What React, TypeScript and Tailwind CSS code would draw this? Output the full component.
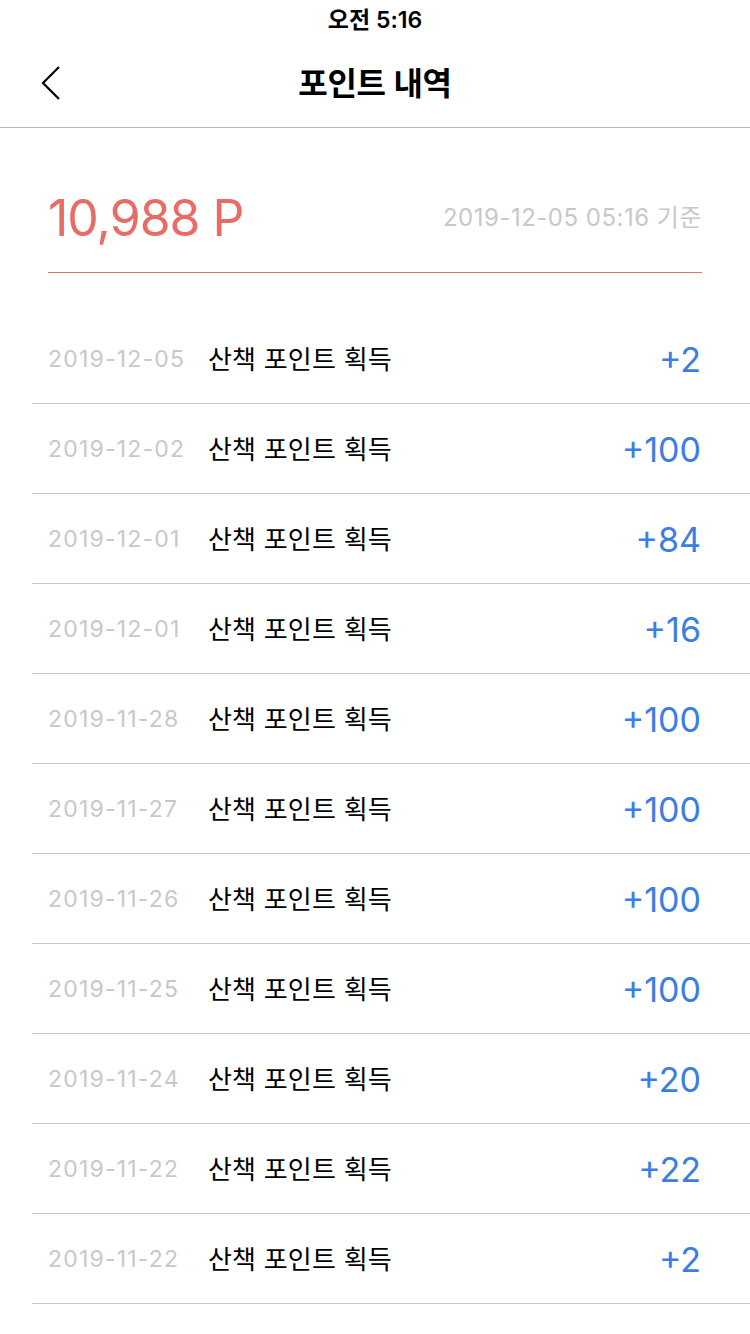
import React from "react";

const rows: [string, string][] = [
  ["2019-12-05", "+2"],
  ["2019-12-02", "+100"],
  ["2019-12-01", "+84"],
  ["2019-12-01", "+16"],
  ["2019-11-28", "+100"],
  ["2019-11-27", "+100"],
  ["2019-11-26", "+100"],
  ["2019-11-25", "+100"],
  ["2019-11-24", "+20"],
  ["2019-11-22", "+22"],
  ["2019-11-22", "+2"],
];

const font = { fontFamily: 'Inter, "Noto Sans CJK KR", sans-serif' };

export default function App() {
  return (
    <div className="w-[750px] min-h-[1334px] bg-white" style={font}>
      <div className="h-[40px] flex items-center justify-center text-[23px] font-semibold text-black">
        오전 5:16
      </div>
      <div className="relative h-[88px] flex items-center justify-center border-b border-[#b6b6b6]">
        <svg className="absolute left-[40px] top-[25px]" width="24" height="36" viewBox="0 0 24 36" fill="none">
          <path d="M19 2 L3 18 L19 34" stroke="#000" strokeWidth="2.2" strokeLinejoin="miter" />
        </svg>
        <div className="text-[32px] font-semibold text-black tracking-[-0.3px]">포인트 내역</div>
      </div>
      <div className="pt-[36px] px-12">
        <div className="h-[108px] flex items-center justify-between">
          <div className="text-[50px] text-[#e96b66] tracking-[-1px]">10,988 P</div>
          <div className="text-[24px] text-[#c8c8c8] tracking-[0.5px]">2019-12-05 05:16 기준</div>
        </div>
        <div className="h-px bg-[#d5736f]" />
      </div>
      <div className="mt-[41px] ml-8">
        {rows.map(([d, a], i) => (
          <div key={i} className="h-[90px] flex items-center border-b border-[#c8c8c8] pl-4 pr-[49px] pt-[2px]">
            <div className="w-[160px] shrink-0 text-[23px] text-[#c8c8c8] tracking-[1.2px]">{d}</div>
            <div className="flex-1 text-[26px] text-black tracking-[0.2px]">산책 포인트 획득</div>
            <div className="text-[34px] text-[#3a7ee4]">{a}</div>
          </div>
        ))}
      </div>
    </div>
  );
}
